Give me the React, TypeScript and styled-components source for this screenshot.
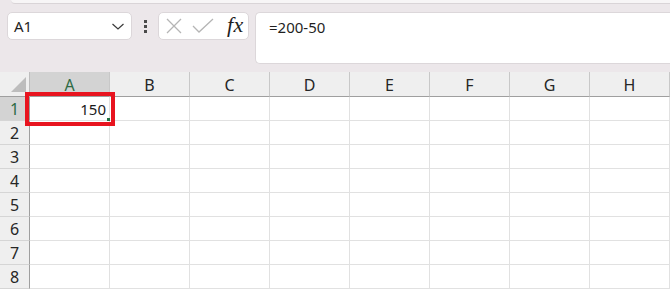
import React from 'react';
import styled, { createGlobalStyle, css } from 'styled-components';

const GlobalStyle = createGlobalStyle`
  html, body {
    margin: 0;
    padding: 0;
    background: #ffffff;
  }
  body {
    font-family: "Noto Sans", "Open Sans", sans-serif;
    width: 670px;
    height: 290px;
    overflow: hidden;
  }
`;

const COLUMNS = ['A', 'B', 'C', 'D', 'E', 'F', 'G', 'H'];
const ROWS = [1, 2, 3, 4, 5, 6, 7, 8];

const Page = styled.div`
  width: 670px;
  height: 290px;
  display: flex;
  flex-direction: column;
  overflow: hidden;
`;

const Toolbar = styled.div`
  height: 72px;
  background: #ece7ea;
  display: flex;
  flex-direction: column;
`;

const TopSheet = styled.div`
  margin-left: 11px;
  height: 3px;
  background: #f7f5f6;
  border-bottom: 1px solid #d9d4d7;
  border-bottom-left-radius: 4px;
`;

const FormulaRow = styled.div`
  display: flex;
  align-items: flex-start;
  padding: 8px 0 0 7px;
`;

const Box = styled.div`
  background: #ffffff;
  border: 1px solid #dcd7da;
  border-radius: 5px;
  box-sizing: border-box;
`;

const NameBox = styled(Box)`
  width: 125px;
  height: 28px;
  display: flex;
  align-items: center;
  justify-content: space-between;
  padding: 0 6px 0 6px;
  font-size: 15px;
  color: #1f1f1f;
`;

const Dots = styled.div`
  width: 26px;
  height: 28px;
  display: flex;
  flex-direction: column;
  align-items: center;
  justify-content: center;
  gap: 2px;
`;

const Dot = styled.span`
  width: 3px;
  height: 3px;
  background: #4a4a4a;
`;

const ButtonGroup = styled(Box)`
  width: 91px;
  height: 28px;
  display: flex;
  align-items: center;
  padding: 0 0 0 7px;
  gap: 10px;
`;

const Fx = styled.span`
  font-family: "Liberation Serif", "DejaVu Serif", serif;
  font-style: italic;
  font-size: 22px;
  color: #1e1e1e;
  margin-left: 3px;
  line-height: 1;
  margin-top: -3px;
  letter-spacing: 0.5px;
`;

const FormulaBox = styled(Box)`
  flex: 1;
  margin-left: 6px;
  height: 52px;
  border-right: none;
  border-top-right-radius: 0;
  border-bottom-right-radius: 0;
  padding: 4px 0 0 13px;
  font-size: 15px;
  color: #1f1f1f;
`;

const SheetArea = styled.div`
  position: relative;
  flex: 1;
`;

const Grid = styled.div`
  display: grid;
  grid-template-columns: 30px repeat(8, 80px);
  grid-template-rows: 25px repeat(8, 24px);
`;

const Corner = styled.div`
  background: #efefef;
  border-right: 1px solid #bdbdbd;
  border-bottom: 1px solid #9f9f9f;
  box-sizing: border-box;
  overflow: hidden;
`;

const HeaderCell = styled.div<{ $selected?: boolean }>`
  box-sizing: border-box;
  background: ${({ $selected }) => ($selected ? '#d3d3d3' : '#efefef')};
  border-right: 1px solid #c8c8c8;
  border-bottom: 1px solid #9f9f9f;
  display: flex;
  align-items: center;
  justify-content: center;
  font-size: 16px;
  color: ${({ $selected }) => ($selected ? '#2e6b45' : '#262626')};
  padding-top: 1px;
`;

const RowHeader = styled.div<{ $selected?: boolean }>`
  box-sizing: border-box;
  background: ${({ $selected }) => ($selected ? '#d3d3d3' : '#efefef')};
  border-right: 1px solid #9f9f9f;
  border-bottom: 1px solid #d5d5d5;
  display: flex;
  align-items: center;
  justify-content: center;
  font-size: 16px;
  color: ${({ $selected }) => ($selected ? '#2e6b45' : '#262626')};
`;

const Cell = styled.div<{ $numeric?: boolean }>`
  box-sizing: border-box;
  border-right: 1px solid #e1e1e1;
  border-bottom: 1px solid #e1e1e1;
  display: flex;
  align-items: center;
  font-size: 15px;
  color: #1a1a1a;
  padding: 0 3px;
  ${({ $numeric }) =>
    $numeric &&
    css`
      justify-content: flex-end;
    `}
`;

const Highlight = styled.div`
  position: absolute;
  left: 25px;
  top: 20px;
  width: 90px;
  height: 34px;
  box-sizing: border-box;
  border: 4px solid #e8141f;
  pointer-events: none;
`;

const FillHandle = styled.div`
  position: absolute;
  left: 107px;
  top: 46px;
  width: 3px;
  height: 3px;
  background: #217346;
`;

const cellValues: Record<string, string> = { A1: '150' };

const App: React.FC = () => (
  <Page>
    <GlobalStyle />
    <Toolbar>
      <TopSheet />
      <FormulaRow>
        <NameBox>
          <span>A1</span>
          <svg width="14" height="14" viewBox="0 0 14 14" fill="none">
            <path d="M1.5 5 L7 10 L12.5 5" stroke="#3a3a3a" strokeWidth="1.2" />
          </svg>
        </NameBox>
        <Dots>
          <Dot />
          <Dot />
          <Dot />
        </Dots>
        <ButtonGroup>
          <svg width="16" height="16" viewBox="0 0 16 16" fill="none">
            <path d="M1 1 L15 15 M15 1 L1 15" stroke="#b5b5b5" strokeWidth="1.3" />
          </svg>
          <svg width="22" height="16" viewBox="0 0 22 16" fill="none">
            <path d="M1 8 L7 14 L21 1" stroke="#b5b5b5" strokeWidth="1.3" />
          </svg>
          <Fx>fx</Fx>
        </ButtonGroup>
        <FormulaBox>=200-50</FormulaBox>
      </FormulaRow>
    </Toolbar>
    <SheetArea>
      <Grid>
        <Corner>
          <svg width="29" height="24" viewBox="0 0 29 24">
            <polygon points="26,5 26,20 11,20" fill="#bdbdbd" />
          </svg>
        </Corner>
        {COLUMNS.map((col) => (
          <HeaderCell key={col} $selected={col === 'A'}>
            {col}
          </HeaderCell>
        ))}
        {ROWS.map((row) => (
          <React.Fragment key={row}>
            <RowHeader $selected={row === 1}>{row}</RowHeader>
            {COLUMNS.map((col) => {
              const value = cellValues[`${col}${row}`];
              return (
                <Cell key={col} $numeric={!!value}>
                  {value}
                </Cell>
              );
            })}
          </React.Fragment>
        ))}
      </Grid>
      <Highlight />
      <FillHandle />
    </SheetArea>
  </Page>
);

export default App;
